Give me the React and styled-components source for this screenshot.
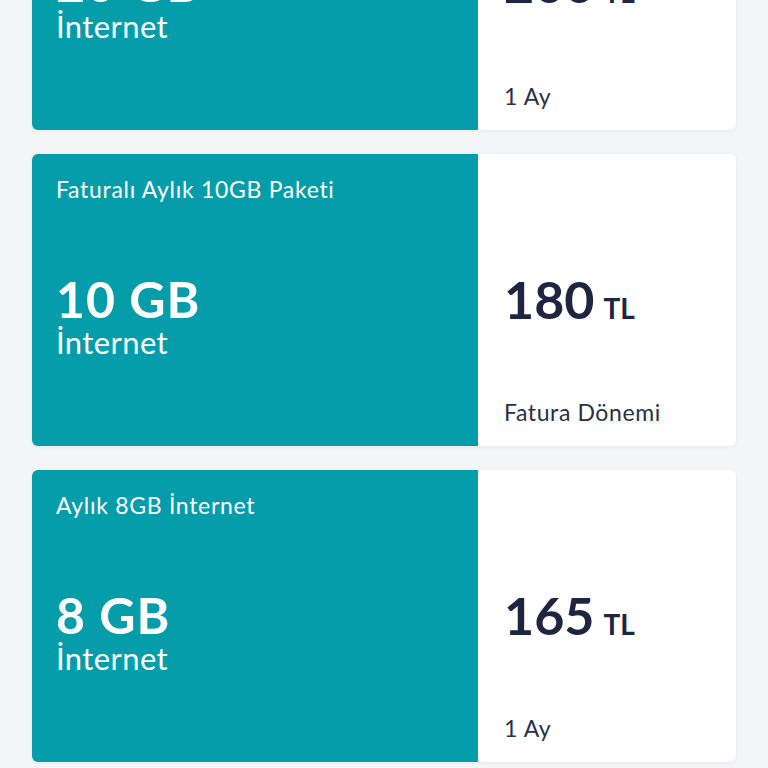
import React from "react"
import styled, { createGlobalStyle } from "styled-components"

const GlobalStyle = createGlobalStyle`
    html, body {
        margin: 0;
        padding: 0;
        background: #f4f5f7;
        font-family: "Lato", "Open Sans", sans-serif;
        overflow: hidden;
    }
`

const Page = styled.div`
    padding: 0 32px;
    height: 768px;
    overflow: hidden;
`

const List = styled.div`
    display: flex;
    flex-direction: column;
    gap: 24px;
    margin-top: -162px;
`

const Card = styled.div`
    display: grid;
    grid-template-columns: 446px 1fr;
    height: 292px;
    border-radius: 6px;
    overflow: hidden;
    background: #ffffff;
    box-shadow: 0 1px 4px rgba(20, 30, 60, 0.06);
`

const LeftPanel = styled.div`
    display: flex;
    flex-direction: column;
    background: #069dab;
    color: #ffffff;
    padding: 22px 24px;
`

const Title = styled.div`
    font-size: 23px;
    line-height: 26px;
    letter-spacing: 0.7px;
`

const Amount = styled.div`
    margin-top: 72px;
    font-size: 50px;
    font-weight: 700;
    line-height: 50px;
    letter-spacing: 1px;
`

const AmountLabel = styled.div`
    font-size: 31px;
    line-height: 36px;
    letter-spacing: 0.4px;
`

const RightPanel = styled.div`
    display: flex;
    flex-direction: column;
    padding: 22px 24px 20px 26px;
    color: #1d2540;
`

const Price = styled.div`
    margin-top: 97px;
    display: flex;
    align-items: baseline;
    gap: 9px;
    font-weight: 700;
    font-size: 52px;
    line-height: 52px;
`

const Currency = styled.span`
    font-size: 28px;
`

const Period = styled.div`
    margin-top: auto;
    font-size: 23px;
    line-height: 28px;
    color: #2a3045;
    letter-spacing: 0.6px;
`

const packages = [
    { title: "Aylık 20GB İnternet", amount: "20 GB", price: "200", period: "1 Ay" },
    { title: "Faturalı Aylık 10GB Paketi", amount: "10 GB", price: "180", period: "Fatura Dönemi" },
    { title: "Aylık 8GB İnternet", amount: "8 GB", price: "165", period: "1 Ay" },
]

const App = () => {
    return (
        <Page>
            <GlobalStyle />
            <List>
                {packages.map((p) => (
                    <Card key={p.title}>
                        <LeftPanel>
                            <Title>{p.title}</Title>
                            <Amount>{p.amount}</Amount>
                            <AmountLabel>İnternet</AmountLabel>
                        </LeftPanel>
                        <RightPanel>
                            <Price>
                                {p.price}
                                <Currency>TL</Currency>
                            </Price>
                            <Period>{p.period}</Period>
                        </RightPanel>
                    </Card>
                ))}
            </List>
        </Page>
    )
}

export default App
